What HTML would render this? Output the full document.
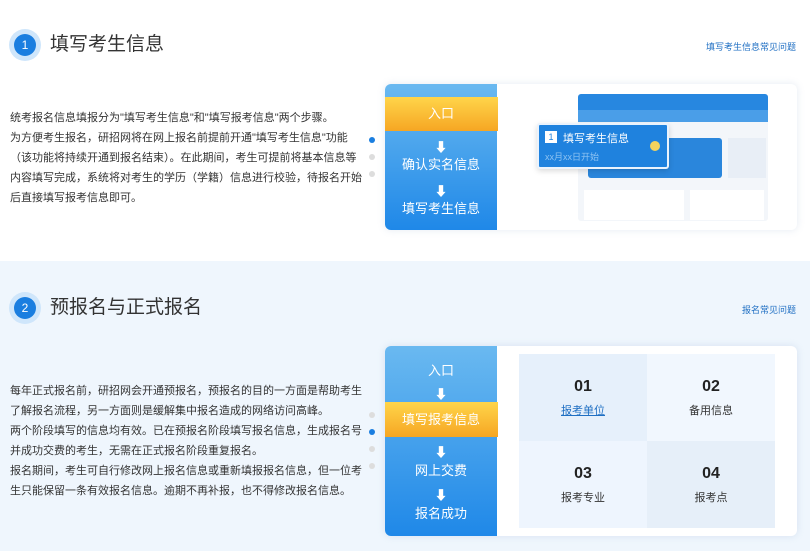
<!DOCTYPE html>
<html><head><meta charset="utf-8"><style>
*{margin:0;padding:0;box-sizing:border-box}
body{width:810px;height:551px;overflow:hidden;background:#fff;font-family:"Liberation Sans","Noto Sans CJK SC",sans-serif;position:relative;color:#333}
.abs{position:absolute}
.circ{position:absolute;width:32px;height:32px;border-radius:50%;background:#cfe6fb}
.circ i{position:absolute;left:5px;top:5px;width:22px;height:22px;border-radius:50%;background:#1a7ee0;color:#fff;font-style:normal;font-size:12px;text-align:center;line-height:22px}
.title{position:absolute;left:50px;font-size:19px;color:#333;line-height:24px}
.link{position:absolute;right:14px;font-size:9px;color:#1f6fc3}
.txt{position:absolute;left:10px;font-size:11px;line-height:20px;color:#333;white-space:nowrap}
.card{position:absolute;left:385px;width:412px;background:#fff;border-radius:6px;box-shadow:0 0 8px rgba(120,150,190,.2);overflow:hidden}
.side{position:absolute;left:0;top:0;width:112px;height:100%;background:linear-gradient(#6ab9f0,#1f88e8)}
.side div{position:absolute;left:0;width:112px;text-align:center;color:#fff;font-size:13px}
.org{background:linear-gradient(#ffd54a,#f6a623);left:-1px!important;width:114px!important}
.arr{font-size:10px}
.dot{position:absolute;left:369px;width:6px;height:6px;border-radius:50%;background:#ddd}
.dot.b{background:#1a7ee0}
.cell{position:absolute;width:128px;height:87px;text-align:center}
.cell b{display:block;margin-top:24px;font-size:16px;color:#222}
.cell span{display:block;margin-top:6px;font-size:11px;color:#333}
</style></head><body>
<div class="circ" style="left:9px;top:29px"><i>1</i></div>
<div class="title" style="top:33px">填写考生信息</div>
<div class="link" style="top:40px">填写考生信息常见问题</div>
<div class="txt" style="top:108px">统考报名信息填报分为"填写考生信息"和"填写报考信息"两个步骤。<br>为方便考生报名，研招网将在网上报名前提前开通"填写考生信息"功能<br>（该功能将持续开通到报名结束）。在此期间，考生可提前将基本信息等<br>内容填写完成，系统将对考生的学历（学籍）信息进行校验，待报名开始<br>后直接填写报考信息即可。</div>
<div class="dot b" style="top:137px"></div><div class="dot" style="top:154px"></div><div class="dot" style="top:171px"></div>
<div class="card" style="top:84px;height:146px">
 <div class="side">
  <div class="org" style="top:13px;height:34px;line-height:34px">入口</div>
  <div class="arr" style="top:53px">⬇</div>
  <div style="top:70px">确认实名信息</div>
  <div class="arr" style="top:97px">⬇</div>
  <div style="top:114px">填写考生信息</div>
 </div>
 <div class="abs" style="left:193px;top:10px;width:190px;height:127px;background:#f3f6fa;border-radius:3px;overflow:hidden">
  <div class="abs" style="left:0;top:0;width:190px;height:16px;background:#2787e0"></div>
  <div class="abs" style="left:0;top:16px;width:190px;height:12px;background:#4a9ee8"></div>
  <div class="abs" style="left:10px;top:44px;width:134px;height:40px;background:#2a86dc;border-radius:3px"></div>
  <div class="abs" style="left:150px;top:44px;width:38px;height:40px;background:#e8eef6"></div>
  <div class="abs" style="left:6px;top:96px;width:100px;height:30px;background:#fff"></div>
  <div class="abs" style="left:112px;top:96px;width:74px;height:30px;background:#fff"></div>
 </div>
 <div class="abs" style="left:152px;top:39px;width:132px;height:46px;background:#1f82de;border:2px solid #eaf3fd;border-radius:3px;box-shadow:0 2px 6px rgba(0,0,0,.15)">
  <div class="abs" style="left:6px;top:6px;width:12px;height:12px;background:#fff;color:#1f82de;font-size:9px;text-align:center;line-height:12px">1</div>
  <div class="abs" style="left:24px;top:5px;color:#fff;font-size:11px">填写考生信息</div>
  <div class="abs" style="left:6px;top:25px;color:#8ec3f2;font-size:9px">xx月xx日开始</div>
  <div class="abs" style="left:111px;top:16px;width:10px;height:10px;border-radius:50%;background:#f4d35e"></div>
 </div>
</div>

<div class="abs" style="left:0;top:261px;width:810px;height:290px;background:#eff6fd"></div>
<div class="circ" style="left:9px;top:292px"><i>2</i></div>
<div class="title" style="top:296px">预报名与正式报名</div>
<div class="link" style="top:303px">报名常见问题</div>
<div class="txt" style="top:381px">每年正式报名前，研招网会开通预报名，预报名的目的一方面是帮助考生<br>了解报名流程，另一方面则是缓解集中报名造成的网络访问高峰。<br>两个阶段填写的信息均有效。已在预报名阶段填写报名信息，生成报名号<br>并成功交费的考生，无需在正式报名阶段重复报名。<br>报名期间，考生可自行修改网上报名信息或重新填报报名信息，但一位考<br>生只能保留一条有效报名信息。逾期不再补报，也不得修改报名信息。</div>
<div class="dot" style="top:412px"></div><div class="dot b" style="top:429px"></div><div class="dot" style="top:446px"></div><div class="dot" style="top:463px"></div>
<div class="card" style="top:346px;height:190px">
 <div class="side">
  <div style="top:14px">入口</div>
  <div class="arr" style="top:38px">⬇</div>
  <div class="org" style="top:56px;height:35px;line-height:35px">填写报考信息</div>
  <div class="arr" style="top:96px">⬇</div>
  <div style="top:114px">网上交费</div>
  <div class="arr" style="top:139px">⬇</div>
  <div style="top:157px">报名成功</div>
 </div>
 <div class="cell" style="left:134px;top:8px;background:#e6f0fb"><b>01</b><span style="color:#1f6fc3;text-decoration:underline">报考单位</span></div>
 <div class="cell" style="left:262px;top:8px;background:#f1f7fe"><b>02</b><span>备用信息</span></div>
 <div class="cell" style="left:134px;top:95px;background:#eef5fe"><b>03</b><span>报考专业</span></div>
 <div class="cell" style="left:262px;top:95px;background:#e6eff9"><b>04</b><span>报考点</span></div>
</div>
</body></html>
